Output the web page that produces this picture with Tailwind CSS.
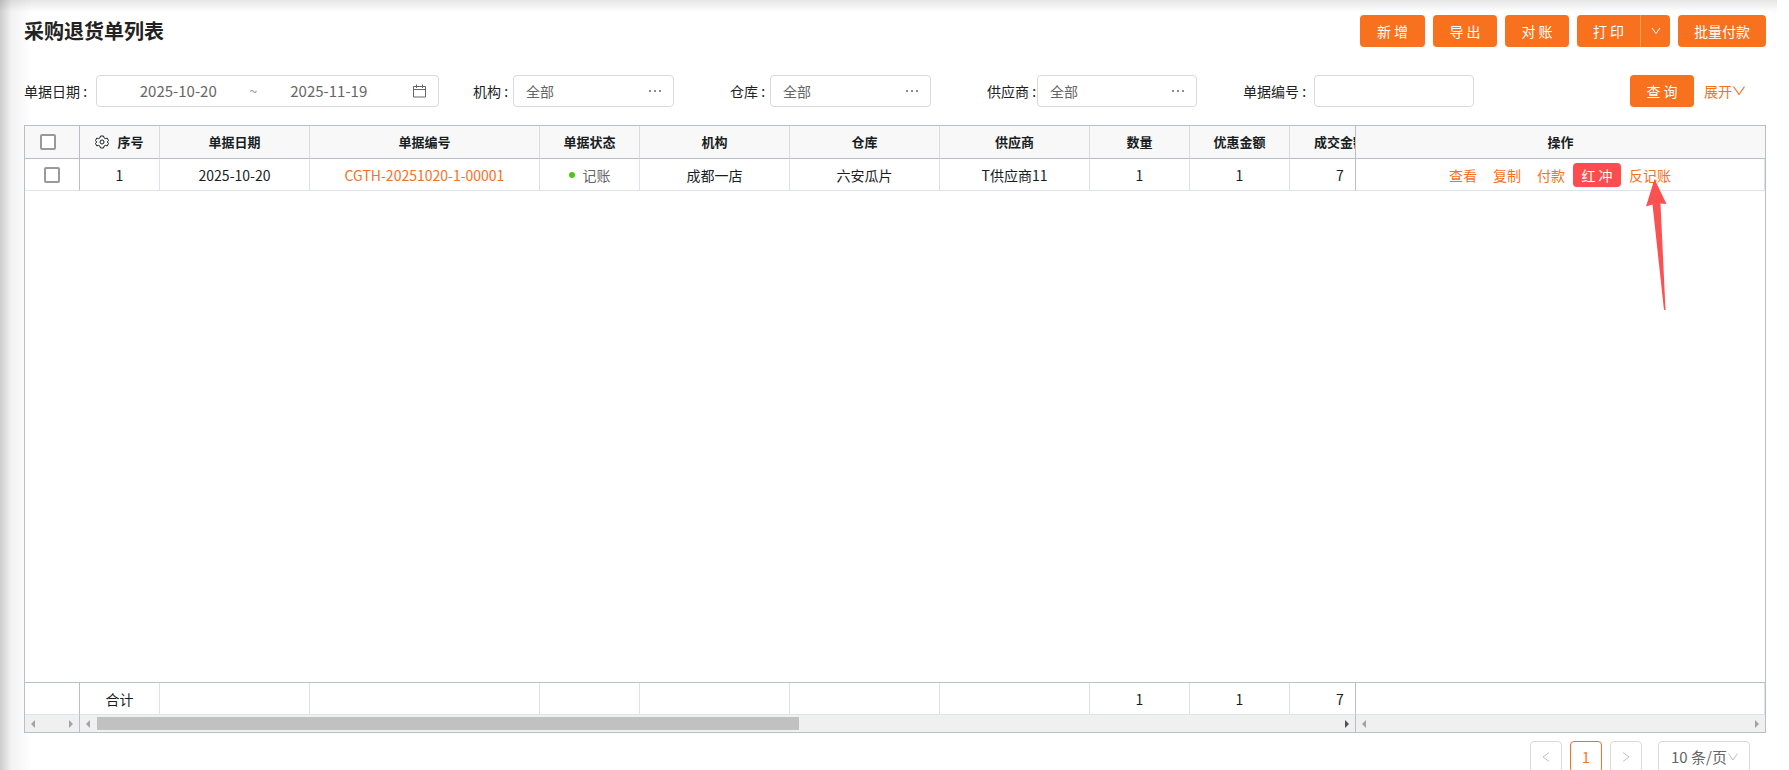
<!doctype html>
<html lang="zh-CN">
	<head>
		<meta charset="UTF-8" />
		<meta name="viewport" content="width=device-width, initial-scale=1.0" />
		<title>采购退货单列表</title>
		<script src="https://cdn.jsdelivr.net/npm/@tailwindcss/browser@4"></script>
	</head>
	<body class="relative h-screen overflow-hidden bg-white font-['Noto_Sans_CJK_SC',sans-serif] text-sm text-[#222]">
		<!-- Edge shadows -->
		<div class="pointer-events-none absolute inset-y-0 left-0 w-8 bg-linear-to-r from-black/20 via-black/5 via-35% to-transparent"></div>
		<div class="pointer-events-none absolute top-0 right-3 left-0 h-3 bg-linear-to-b from-black/10 to-transparent"></div>

		<div class="relative pr-[23px] pl-6">
			<!-- Header -->
			<header class="flex h-[62px] items-center justify-between">
				<h1 class="text-xl font-bold">采购退货单列表</h1>
				<div class="flex gap-2 text-white">
					<button type="button" class="h-8 w-[65px] rounded bg-[#f7711e]">新 增</button>
					<button type="button" class="h-8 w-16 rounded bg-[#f7711e]">导 出</button>
					<button type="button" class="h-8 w-16 rounded bg-[#f7711e]">对 账</button>
					<div class="flex">
						<button type="button" class="h-8 w-16 rounded-l border-r border-[#fa9b5f] bg-[#f7711e]">打 印</button>
						<button type="button" aria-label="更多打印" class="flex h-8 w-[29px] items-center justify-center rounded-r bg-[#f7711e]">
							<svg class="h-2 w-2.5" viewBox="0 0 10 8" fill="none" stroke="currentColor"><path d="M1 1l4 5.500 4-5.500" /></svg>
						</button>
					</div>
					<button type="button" class="h-8 w-[88px] rounded bg-[#f7711e]">批量付款</button>
				</div>
			</header>

			<!-- Filters -->
			<form class="flex items-center pt-[13px] pb-[18px]">
				<div class="flex w-[449px] items-center">
					<label for="dateFrom" class="w-[72px]">单据日期 :</label>
					<div class="flex h-8 w-[343px] items-center rounded border border-[#d9d9d9] bg-white pr-3 pl-[18px] text-[15px] text-[#666]">
						<input id="dateFrom" type="text" value="2025-10-20" class="w-0 flex-1 text-center outline-none" />
						<span class="w-6 text-center text-sm text-[#999]">~</span>
						<input id="dateTo" type="text" value="2025-11-19" aria-label="结束日期" class="w-0 flex-1 text-center outline-none" />
						<svg class="ml-5 size-3.5" viewBox="0 0 14 14" fill="none" stroke="currentColor"><path d="M1.500 2.500h12v10.500h-12zM1.500 5.500h12M4.500 .5v3.500M10.500 .5v3.500" /></svg>
					</div>
				</div>
				<div class="flex w-[257px] items-center">
					<label for="org" class="w-10">机构 :</label>
					<div class="flex h-8 w-[161px] items-center rounded border border-[#d9d9d9] bg-white px-3 text-[#666]">
						<input id="org" type="text" value="全部" class="w-0 flex-1 outline-none" />
						<button type="button" aria-label="选择机构" class="text-[#8c8c8c]">
							<svg class="h-3 w-3" viewBox="0 0 12 12" fill="currentColor"><path d="M0 5h2v2H0zM5 5h2v2H5zM10 5h2v2h-2z" /></svg>
						</button>
					</div>
				</div>
				<div class="flex w-[257px] items-center">
					<label for="store" class="w-10">仓库 :</label>
					<div class="flex h-8 w-[161px] items-center rounded border border-[#d9d9d9] bg-white px-3 text-[#666]">
						<input id="store" type="text" value="全部" class="w-0 flex-1 outline-none" />
						<button type="button" aria-label="选择仓库" class="text-[#8c8c8c]">
							<svg class="h-3 w-3" viewBox="0 0 12 12" fill="currentColor"><path d="M0 5h2v2H0zM5 5h2v2H5zM10 5h2v2h-2z" /></svg>
						</button>
					</div>
				</div>
				<div class="flex w-[256px] items-center">
					<label for="supplier" class="w-[50px]">供应商 :</label>
					<div class="flex h-8 w-[160px] items-center rounded border border-[#d9d9d9] bg-white px-3 text-[#666]">
						<input id="supplier" type="text" value="全部" class="w-0 flex-1 outline-none" />
						<button type="button" aria-label="选择供应商" class="text-[#8c8c8c]">
							<svg class="h-3 w-3" viewBox="0 0 12 12" fill="currentColor"><path d="M0 5h2v2H0zM5 5h2v2H5zM10 5h2v2h-2z" /></svg>
						</button>
					</div>
				</div>
				<div class="flex items-center">
					<label for="billNo" class="w-[71px]">单据编号 :</label>
					<input id="billNo" type="text" class="h-8 w-[160px] rounded border border-[#d9d9d9] bg-white px-3 outline-none" />
				</div>
				<div class="mr-5 ml-auto flex items-center gap-2.5">
					<button type="submit" class="h-8 w-16 rounded bg-[#f7711e] text-white shadow-xs">查 询</button>
					<button type="button" class="flex items-center text-[#f7711e]">
						展开
						<svg class="h-3 w-3.5" viewBox="0 0 14 12" fill="none" stroke="currentColor" stroke-width="1.2"><path d="M1.500 1.500L7 9.500l5.500-8" /></svg>
					</button>
				</div>
			</form>

			<!-- Grid -->
			<div class="border border-[#babfc7] bg-white">
				<table class="w-full table-fixed border-separate border-spacing-0 text-center text-[#181d1f]">
					<colgroup>
						<col class="w-[55px]" />
						<col class="w-[80px]" />
						<col class="w-[150px]" />
						<col class="w-[230px]" />
						<col class="w-[100px]" />
						<col class="w-[150px]" />
						<col class="w-[150px]" />
						<col class="w-[150px]" />
						<col class="w-[100px]" />
						<col class="w-[100px]" />
						<col />
						<col class="w-[409px]" />
					</colgroup>
					<thead class="bg-[#f8f8f8] text-[13px]">
						<tr class="h-[33px] *:border-b *:border-b-[#babfc7] *:p-0 *:font-bold">
							<th class="border-r border-r-[#babfc7]">
								<input type="checkbox" aria-label="全选" class="mr-2 block size-4 appearance-none justify-self-center rounded-xs border-2 border-[#999] bg-white" />
							</th>
							<th class="border-r border-r-[#d9dce1]">
								<div class="flex items-center justify-center gap-2">
									<svg class="size-3.5" viewBox="0 0 14 14" fill="none" stroke="currentColor"><path d="M5.500 1h3l.5 1.800 1.400.8 1.800-.5 1.300 2.400-1.200 1.500 1.200 1.500-1.300 2.400-1.800-.5-1.400.8-.5 1.800h-3L5 11.200l-1.400-.8-1.800.5L.5 8.500 1.700 7 .5 5.500l1.300-2.400 1.800.5L5 2.800z" /><circle cx="7" cy="7" r="2" /></svg>
									序号
								</div>
							</th>
							<th class="border-r border-r-[#d9dce1]">单据日期</th>
							<th class="border-r border-r-[#d9dce1]">单据编号</th>
							<th class="border-r border-r-[#d9dce1]">单据状态</th>
							<th class="border-r border-r-[#d9dce1]">机构</th>
							<th class="border-r border-r-[#d9dce1]">仓库</th>
							<th class="border-r border-r-[#d9dce1]">供应商</th>
							<th class="border-r border-r-[#d9dce1]">数量</th>
							<th class="border-r border-r-[#d9dce1]">优惠金额</th>
							<th class="overflow-hidden border-r border-r-[#babfc7]"><div class="w-[100px]">成交金额</div></th>
							<th>操作</th>
						</tr>
					</thead>
					<tbody>
						<tr class="h-8 *:border-r *:border-b *:border-b-[#dde2eb] *:p-0">
							<td class="border-r-[#babfc7]">
								<input type="checkbox" aria-label="选择第 1 行" class="block size-4 appearance-none justify-self-center rounded-xs border-2 border-[#999] bg-white" />
							</td>
							<td class="border-r-[#dde2eb]">1</td>
							<td class="border-r-[#dde2eb]">2025-10-20</td>
							<td class="border-r-[#dde2eb]"><a href="#" class="text-[#f7711e]">CGTH-20251020-1-00001</a></td>
							<td class="border-r-[#dde2eb]">
								<div class="flex items-center justify-center gap-2 text-[#666]">
									<span class="size-1.5 rounded-full bg-[#52c41a]"></span>
									记账
								</div>
							</td>
							<td class="border-r-[#dde2eb]">成都一店</td>
							<td class="border-r-[#dde2eb]">六安瓜片</td>
							<td class="border-r-[#dde2eb]">T供应商11</td>
							<td class="border-r-[#dde2eb]">1</td>
							<td class="border-r-[#dde2eb]">1</td>
							<td class="overflow-hidden border-r-[#babfc7]"><div class="w-[100px]">7</div></td>
							<td class="border-r-[#dde2eb]">
								<div class="relative flex items-center justify-center gap-4 text-[#f7711e]">
									<a href="#">查看</a>
									<a href="#">复制</a>
									<div class="flex items-center gap-2">
										<a href="#">付款</a>
										<button type="button" class="h-6 w-12 rounded bg-[#ff4d4f] text-white shadow-xs">红 冲</button>
										<a href="#" class="relative">
											反记账
											<!-- Pointer arrow -->
											<svg class="pointer-events-none absolute top-3.5 left-4 h-[132px] w-6" viewBox="0 0 24 132" fill="#fc5151"><path d="M9.500 0L21.500 25l-6-.5L20.500 131h-1.500L7.500 25.500 1 27.500z" /></svg>
										</a>
									</div>
								</div>
							</td>
						</tr>
						<tr>
							<td colspan="12" class="h-[492px] border-b border-[#babfc7] p-0"></td>
						</tr>
					</tbody>
					<tfoot>
						<tr class="h-8 *:border-r *:border-b *:border-b-[#dde2eb] *:p-0">
							<td class="border-r-[#babfc7]"></td>
							<td class="border-r-[#dde2eb]">合计</td>
							<td class="border-r-[#dde2eb]"></td>
							<td class="border-r-[#dde2eb]"></td>
							<td class="border-r-[#dde2eb]"></td>
							<td class="border-r-[#dde2eb]"></td>
							<td class="border-r-[#dde2eb]"></td>
							<td class="border-r-[#dde2eb]"></td>
							<td class="border-r-[#dde2eb]">1</td>
							<td class="border-r-[#dde2eb]">1</td>
							<td class="overflow-hidden border-r-[#babfc7]"><div class="w-[100px]">7</div></td>
							<td class="border-r-[#dde2eb]"></td>
						</tr>
					</tfoot>
				</table>

				<!-- Scrollbars of the three panes -->
				<div class="flex h-[17px] bg-[#f0f0f0] text-[#a3a3a3]">
					<div class="flex w-[55px] items-center justify-between border-r border-[#babfc7] px-1.5">
						<svg class="h-2 w-1" viewBox="0 0 4 8" fill="currentColor"><path d="M4 0v8L0 4z" /></svg>
						<svg class="h-2 w-1" viewBox="0 0 4 8" fill="currentColor"><path d="M0 0v8l4-4z" /></svg>
					</div>
					<div class="flex flex-1 items-center border-r border-[#babfc7] px-1.5">
						<svg class="h-2 w-1" viewBox="0 0 4 8" fill="currentColor"><path d="M4 0v8L0 4z" /></svg>
						<div class="ml-[7px] h-[13px] w-5/9 bg-[#c1c1c1]"></div>
						<svg class="ml-auto h-2 w-1 text-[#505050]" viewBox="0 0 4 8" fill="currentColor"><path d="M0 0v8l4-4z" /></svg>
					</div>
					<div class="flex w-[409px] items-center justify-between px-1.5">
						<svg class="h-2 w-1" viewBox="0 0 4 8" fill="currentColor"><path d="M4 0v8L0 4z" /></svg>
						<svg class="h-2 w-1" viewBox="0 0 4 8" fill="currentColor"><path d="M0 0v8l4-4z" /></svg>
					</div>
				</div>
			</div>

			<!-- Pagination -->
			<nav class="mr-4 flex justify-end gap-2 pt-2">
				<button type="button" aria-label="上一页" class="flex size-8 items-center justify-center rounded border border-[#d9d9d9] text-[#bfbfbf]">
					<svg class="h-2.5 w-2" viewBox="0 0 8 10" fill="none" stroke="currentColor"><path d="M7 .5L1 5l6 4.500" /></svg>
				</button>
				<button type="button" class="size-8 rounded border border-[#f7711e] text-[#f7711e]">1</button>
				<button type="button" aria-label="下一页" class="flex size-8 items-center justify-center rounded border border-[#d9d9d9] text-[#bfbfbf]">
					<svg class="h-2.5 w-2" viewBox="0 0 8 10" fill="none" stroke="currentColor"><path d="M1 .5L7 5 1 9.500" /></svg>
				</button>
				<div class="relative ml-2">
					<select aria-label="每页条数" class="h-8 w-[92px] appearance-none rounded border border-[#d9d9d9] pl-3 text-[15px] text-[#666]">
						<option>10 条/页</option>
					</select>
					<svg class="pointer-events-none absolute top-3 right-3 h-2 w-2.5 text-[#bfbfbf]" viewBox="0 0 10 8" fill="none" stroke="currentColor"><path d="M.5 .5L5 7 9.500 .5" /></svg>
				</div>
			</nav>
		</div>
	</body>
</html>
